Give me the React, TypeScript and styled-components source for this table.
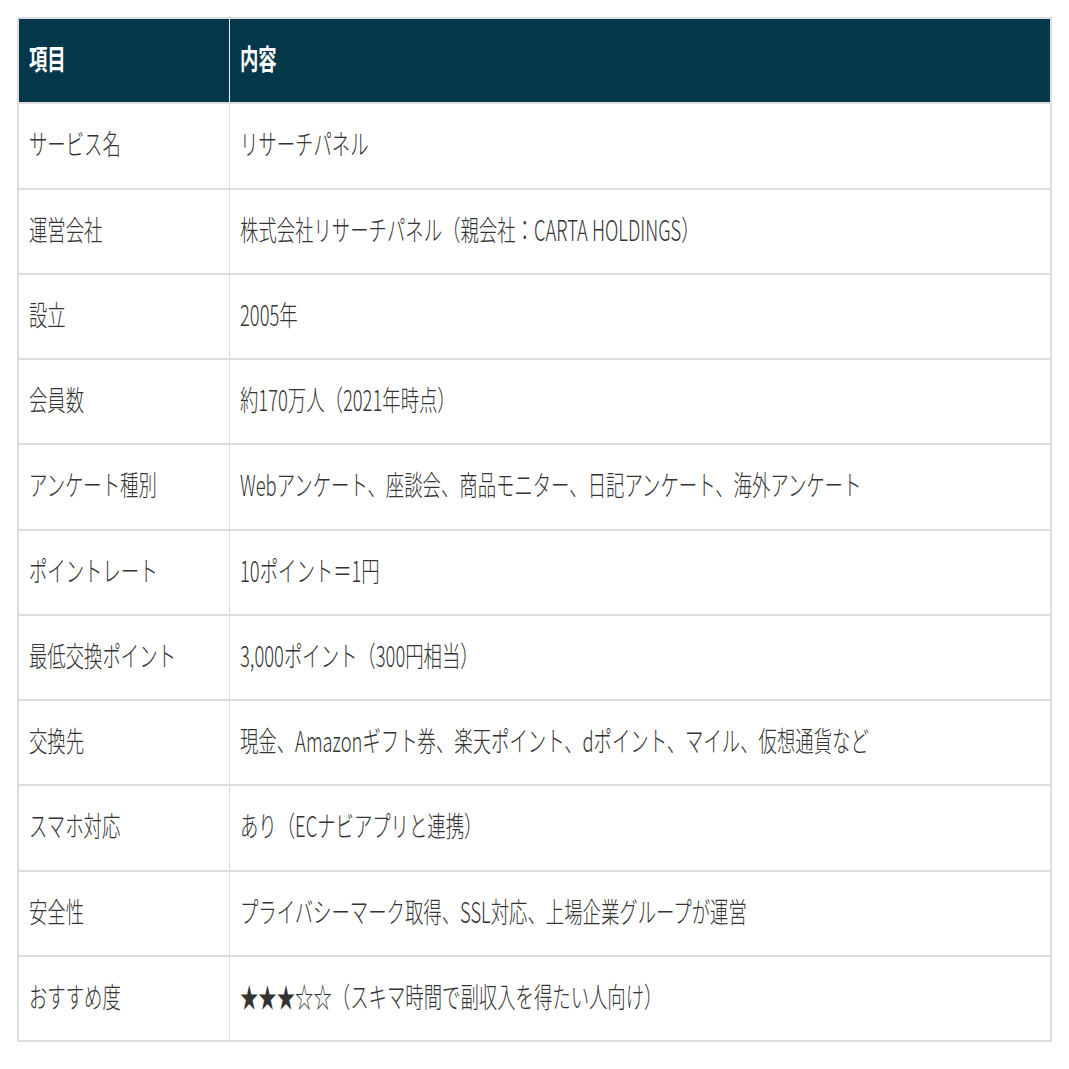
import React from "react";
import styled, { createGlobalStyle } from "styled-components";

const GlobalStyle = createGlobalStyle`
  html, body {
    margin: 0;
    padding: 0;
    background: #fff;
  }
  body {
    font-family: "Noto Sans CJK JP", "Noto Sans", sans-serif;
    color: #333;
  }
`;

const rows: [string, string][] = [
  ["サービス名", "リサーチパネル"],
  ["運営会社", "株式会社リサーチパネル（親会社：CARTA HOLDINGS）"],
  ["設立", "2005年"],
  ["会員数", "約170万人（2021年時点）"],
  ["アンケート種別", "Webアンケート、座談会、商品モニター、日記アンケート、海外アンケート"],
  ["ポイントレート", "10ポイント＝1円"],
  ["最低交換ポイント", "3,000ポイント（300円相当）"],
  ["交換先", "現金、Amazonギフト券、楽天ポイント、dポイント、マイル、仮想通貨など"],
  ["スマホ対応", "あり（ECナビアプリと連携）"],
  ["安全性", "プライバシーマーク取得、SSL対応、上場企業グループが運営"],
  ["おすすめ度", "★★★☆☆（スキマ時間で副収入を得たい人向け）"],
];

const App: React.FC = () => {
  return (
    <Page>
      <GlobalStyle />
      <InfoTable>
        <thead>
          <tr>
            <HeadCell $narrow>
              <Label>項目</Label>
            </HeadCell>
            <HeadCell>
              <Label>内容</Label>
            </HeadCell>
          </tr>
        </thead>
        <tbody>
          {rows.map(([key, value]) => (
            <tr key={key}>
              <Cell $narrow>
                <Label>{key}</Label>
              </Cell>
              <Cell>
                <Label>{value}</Label>
              </Cell>
            </tr>
          ))}
        </tbody>
      </InfoTable>
    </Page>
  );
};

const Page = styled.div`
  padding: 17px 17px 0 17px;
`;

const InfoTable = styled.table`
  width: 1035px;
  border-collapse: collapse;
  table-layout: fixed;
  border-left: 2px solid #ddd;
  border-right: 2px solid #ddd;
`;

const HeadCell = styled.th<{ $narrow?: boolean }>`
  box-sizing: border-box;
  width: ${(p) => (p.$narrow ? "211px" : "auto")};
  height: 85.25px;
  padding: 0 10px 5px;
  background: #05374a;
  color: #fff;
  font-weight: 700;
  font-size: 28px;
  text-align: left;
  border-top: 2px solid #ddd;
  border-bottom: 2px solid #ddd;
  border-left: 1px solid #e8eef0;
  border-right: 1px solid #e8eef0;
  overflow: hidden;
  white-space: nowrap;
`;

const Cell = styled.td<{ $narrow?: boolean }>`
  box-sizing: border-box;
  width: ${(p) => (p.$narrow ? "211px" : "auto")};
  height: 85.25px;
  padding: 0 10px 5px;
  font-size: 28px;
  font-weight: 300;
  color: #333;
  border-top: 2px solid #ddd;
  border-bottom: 2px solid #ddd;
  border-left: 1px solid #ddd;
  border-right: 1px solid #ddd;
  overflow: hidden;
  white-space: nowrap;
`;

const Label = styled.span`
  display: inline-block;
  transform: scaleX(0.656);
  transform-origin: left center;
  line-height: 1;
`;

export default App;
